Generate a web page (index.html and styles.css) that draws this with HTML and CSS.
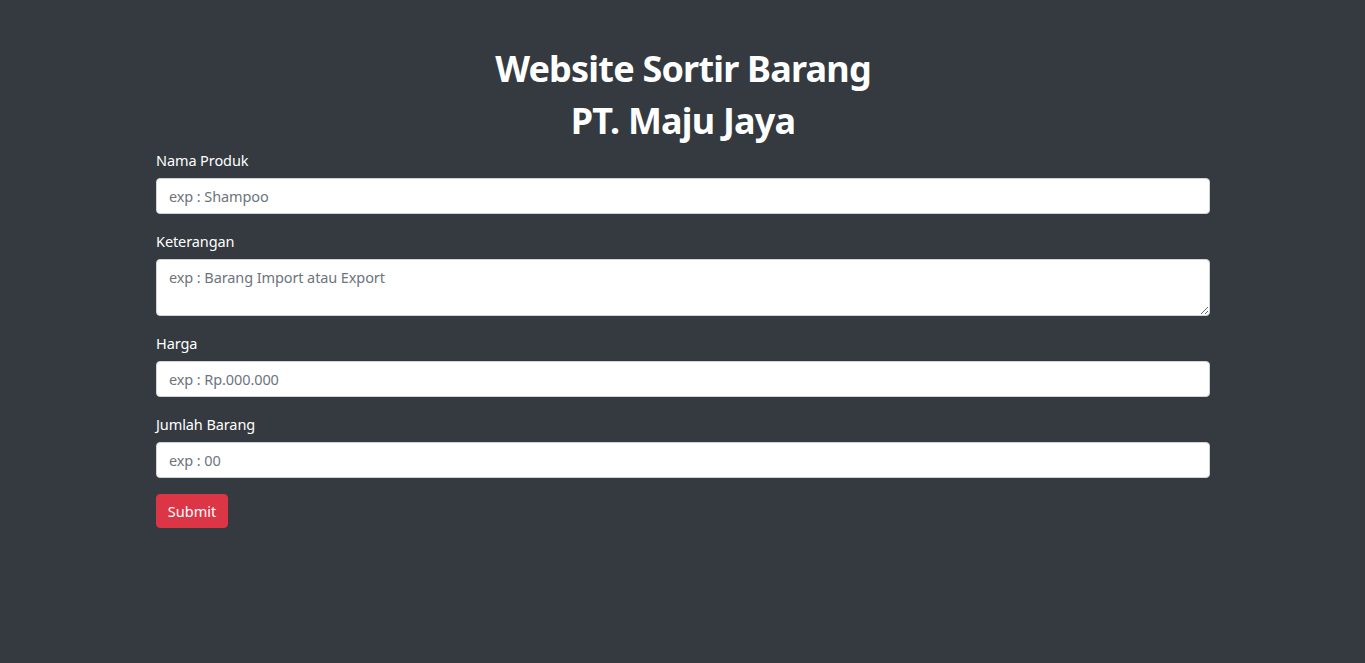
FILE: index.html
```html
<!DOCTYPE html>
<html lang="id">
<head>
<meta charset="utf-8">
<title>Website Sortir Barang</title>
<link rel="stylesheet" href="styles.css">
</head>
<body>
<main class="page">
  <h1 class="title">Website Sortir Barang<br>PT. Maju Jaya</h1>
  <form class="form">
    <div class="group">
      <label class="label" for="nama">Nama Produk</label>
      <input class="control" id="nama" type="text" placeholder="exp : Shampoo">
    </div>
    <div class="group">
      <label class="label" for="ket">Keterangan</label>
      <textarea class="control area" id="ket" placeholder="exp : Barang Import atau Export"></textarea>
    </div>
    <div class="group">
      <label class="label" for="harga">Harga</label>
      <input class="control" id="harga" type="text" placeholder="exp : Rp.000.000">
    </div>
    <div class="group">
      <label class="label" for="jumlah">Jumlah Barang</label>
      <input class="control" id="jumlah" type="text" placeholder="exp : 00">
    </div>
    <button class="btn" type="button">Submit</button>
  </form>
</main>
</body>
</html>
```
FILE: styles.css
```css
html, body {
  margin: 0;
  padding: 0;
  background: #343a40;
  height: 100%;
}
body {
  font-family: "Noto Sans", "Open Sans", sans-serif;
  color: #fff;
}
.page {
  padding: 43px 155px 0 156px;
}
.title {
  margin: 0 0 1px;
  text-align: center;
  font-size: 36px;
  letter-spacing: -0.8px;
  line-height: 52px;
  font-weight: 700;
}
.form {
  display: flex;
  flex-direction: column;
}
.group {
  display: flex;
  flex-direction: column;
  margin-bottom: 15px;
}
.label {
  font-size: 14.5px;
  letter-spacing: -0.1px;
  line-height: 24px;
  margin-bottom: 6px;
}
.control {
  box-sizing: border-box;
  height: 36px;
  width: 100%;
  padding: 6px 12px;
  font-family: inherit;
  font-size: 14.5px;
  letter-spacing: -0.1px;
  line-height: 22px;
  color: #495057;
  background: #fff;
  border: 1px solid #ced4da;
  border-radius: 4px;
  margin: 0;
}
.control::placeholder {
  color: #6c757d;
}
.area {
  height: 57px;
  resize: vertical;
}
.btn {
  align-self: flex-start;
  margin-top: 1px;
  width: 72px;
  height: 34px;
  padding: 0;
  background: #dc3545;
  border: 1px solid #dc3545;
  border-radius: 4px;
  color: #fff;
  font-family: inherit;
  font-size: 14.5px;
}
```
